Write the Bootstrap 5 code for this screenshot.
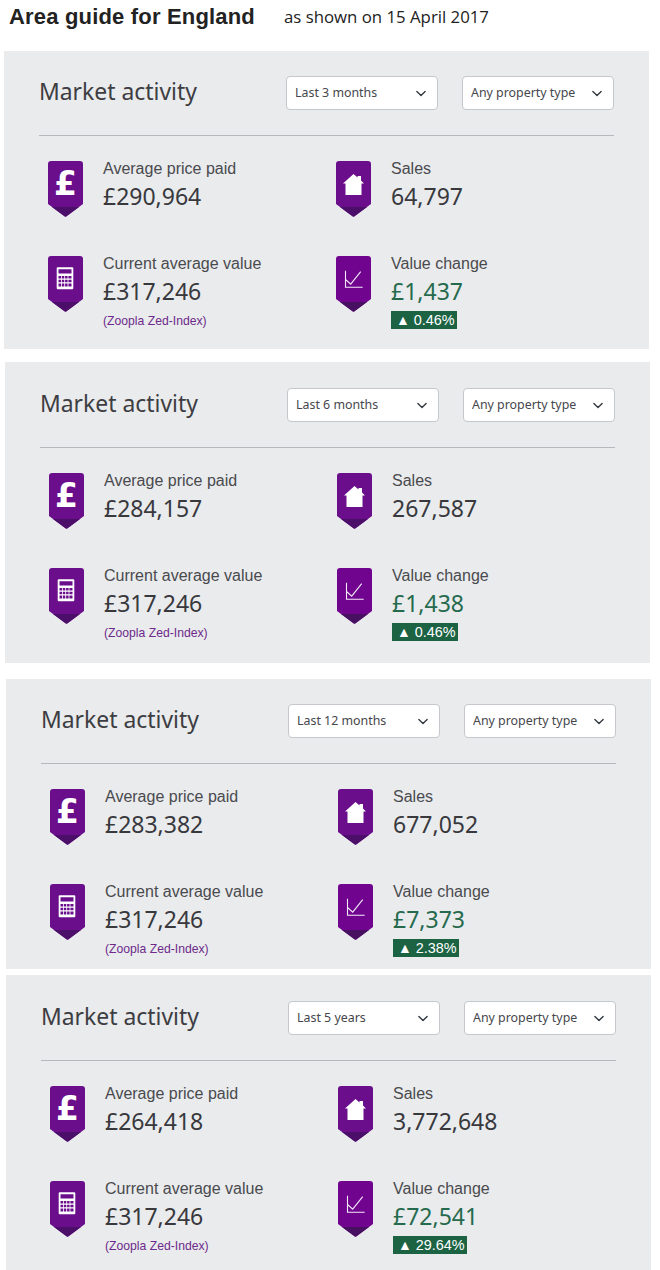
<!DOCTYPE html>
<html lang="en">
<head>
<meta charset="utf-8">
<title>Area guide for England</title>
<link rel="stylesheet" href="https://cdn.jsdelivr.net/npm/bootstrap@5.3.0/dist/css/bootstrap.min.css">
<style>
html,body{background:#fff;margin:0;padding:0;overflow:hidden}
body{width:660px;height:1270px;font-family:"Liberation Sans",Arial,sans-serif;color:#3a3a3e}
.top-bar{height:51px;padding:3px 0 0 9px;gap:29px}
.top-title{font:700 22px/28px "Liberation Sans",Arial,sans-serif;letter-spacing:.18px;color:#222;margin:0}
.top-note{font:400 16.8px/28px "Open Sans",sans-serif;color:#222}
.pane{width:645px;background:#e9ebed;padding:25px 35px 0;box-sizing:border-box}
.pane-a{margin-left:4px;height:298px;margin-bottom:13px}
.pane-b{margin-left:5px;height:301px;margin-bottom:16px;padding-top:26px}
.pane-c{margin-left:6px;height:290px;margin-bottom:6px}
.pane-d{margin-left:6px;height:295px;padding-top:26px}
.pane-head{height:34px;width:575px}
.pane-title{font:400 22.9px/30px "Noto Sans",sans-serif;color:#3d3d42;margin:0 0 2px;flex:1}
.pick{width:152px;height:34px;font:400 12.4px/18px "Noto Sans",sans-serif;color:#46464c;padding:0 20px 0 8px;border:1px solid #c4c8cc;border-radius:4px;background-size:14px 11px;background-position:right 9.5px center;background-color:#fff}
.pick+.pick{margin-left:24px}
.rule{width:575px;height:1px;background:#b3b9bd;margin:25px 0}
.stat-grid{width:576px;margin-left:9px;display:grid;grid-template-columns:288px 288px;grid-auto-rows:95px}
.stat{gap:20px}
.pin{width:35px;height:56px;flex:none;display:block}
.stat-label{font:400 16px/18px "Liberation Sans",Arial,sans-serif;color:#4a4a4e;margin-bottom:1px;margin-top:-1px}
.stat-value{font:400 23px/34px "Noto Sans",sans-serif;color:#38383d}
.stat-value.rise{color:#266a4d}
.stat-note{font:400 12.2px/14px "Liberation Sans",Arial,sans-serif;color:#6d2a8a;margin-top:6px}
.rise-tag{display:inline-block;background:#1c6344;color:#fff;font:400 14.4px/18px "Liberation Sans",Arial,sans-serif;padding:0 2px 0 5px;margin-top:2px}
.rise-tag i{font-style:normal;font-size:14px}
.pound{font-family:"DejaVu Sans",sans-serif;font-weight:700;font-size:33px;fill:#fff}
</style>
</head>
<body>
<svg width="0" height="0" class="position-absolute">
<defs>
<symbol id="pin-a" viewBox="0 0 35 56"><path d="M3 0H32A3 3 0 0 1 35 3V43L18.500 55.300Q17.500 56 16.500 55.300L0 43V3A3 3 0 0 1 3 0Z" fill="#6a0e8c"/><path d="M4 46H31L18.500 55.300Q17.500 56 16.500 55.300Z" fill="#4b0f69"/></symbol>
<symbol id="pin-b" viewBox="0 0 35 56"><path d="M3 0H32A3 3 0 0 1 35 3V43L18.500 55.300Q17.500 56 16.500 55.300L0 43V3A3 3 0 0 1 3 0Z" fill="#70048f"/><path d="M4 46H31L18.500 55.300Q17.500 56 16.500 55.300Z" fill="#481060"/></symbol>
<symbol id="glyph-house" viewBox="0 0 35 56"><path d="M17.500 13L21.500 16.500V15H25V19.500L28 22.500H25.500V34H9.500V22.500H7Z" fill="#fff"/></symbol>
<symbol id="glyph-calc" viewBox="0 0 35 56"><path fill-rule="evenodd" d="M9.700 11.300H24.300A1 1 0 0 1 25.300 12.300V32.300A1 1 0 0 1 24.300 33.300H9.700A1 1 0 0 1 8.700 32.300V12.300A1 1 0 0 1 9.700 11.300ZM10.500 13.200V17.500H23.500V13.200ZM10.500 20V22.500H13V20ZM13.800 20V22.500H16.300V20ZM17.100 20V22.500H19.600V20ZM20.400 20V22.500H23.500V20ZM10.500 23.700V26.200H13V23.700ZM13.800 23.700V26.200H16.300V23.700ZM17.100 23.700V26.200H19.600V23.700ZM20.400 23.700V26.200H23.500V23.700ZM10.500 27.400V30.500H13V27.400ZM13.800 27.400V30.500H16.300V27.400ZM17.100 27.400V30.500H19.600V27.400ZM20.400 27.400V30.500H23.500V27.400Z" fill="#fff"/></symbol>
<symbol id="glyph-chart" viewBox="0 0 35 56"><path d="M9.500 14.700V31.300H26.700M9.500 23.500L14.700 28.200 24.700 15.700" fill="none" stroke="#f3e9f7" stroke-width="1.100"/></symbol>
</defs>
</svg>

<div class="top-bar d-flex align-items-start">
  <h1 class="top-title">Area guide for England</h1>
  <span class="top-note">as shown on 15 April 2017</span>
</div>

<section class="pane pane-a">
  <div class="pane-head d-flex align-items-center">
    <h2 class="pane-title">Market activity</h2>
    <select class="form-select pick"><option>Last 3 months</option></select>
    <select class="form-select pick"><option>Any property type</option></select>
  </div>
  <div class="rule"></div>
  <div class="stat-grid">
    <div class="stat d-flex"><svg class="pin"><use href="#pin-a"/><text x="17.500" y="34" text-anchor="middle" class="pound">£</text></svg><div><div class="stat-label">Average price paid</div><div class="stat-value">£290,964</div></div></div>
    <div class="stat d-flex"><svg class="pin"><use href="#pin-a"/><use href="#glyph-house"/></svg><div><div class="stat-label">Sales</div><div class="stat-value">64,797</div></div></div>
    <div class="stat d-flex"><svg class="pin"><use href="#pin-a"/><use href="#glyph-calc"/></svg><div><div class="stat-label">Current average value</div><div class="stat-value">£317,246</div><div class="stat-note">(Zoopla Zed-Index)</div></div></div>
    <div class="stat d-flex"><svg class="pin"><use href="#pin-b"/><use href="#glyph-chart"/></svg><div><div class="stat-label">Value change</div><div class="stat-value rise">£1,437</div><div class="rise-tag"><i>▲</i> 0.46%</div></div></div>
  </div>
</section>

<section class="pane pane-b">
  <div class="pane-head d-flex align-items-center">
    <h2 class="pane-title">Market activity</h2>
    <select class="form-select pick"><option>Last 6 months</option></select>
    <select class="form-select pick"><option>Any property type</option></select>
  </div>
  <div class="rule"></div>
  <div class="stat-grid">
    <div class="stat d-flex"><svg class="pin"><use href="#pin-a"/><text x="17.500" y="34" text-anchor="middle" class="pound">£</text></svg><div><div class="stat-label">Average price paid</div><div class="stat-value">£284,157</div></div></div>
    <div class="stat d-flex"><svg class="pin"><use href="#pin-a"/><use href="#glyph-house"/></svg><div><div class="stat-label">Sales</div><div class="stat-value">267,587</div></div></div>
    <div class="stat d-flex"><svg class="pin"><use href="#pin-a"/><use href="#glyph-calc"/></svg><div><div class="stat-label">Current average value</div><div class="stat-value">£317,246</div><div class="stat-note">(Zoopla Zed-Index)</div></div></div>
    <div class="stat d-flex"><svg class="pin"><use href="#pin-b"/><use href="#glyph-chart"/></svg><div><div class="stat-label">Value change</div><div class="stat-value rise">£1,438</div><div class="rise-tag"><i>▲</i> 0.46%</div></div></div>
  </div>
</section>

<section class="pane pane-c">
  <div class="pane-head d-flex align-items-center">
    <h2 class="pane-title">Market activity</h2>
    <select class="form-select pick"><option>Last 12 months</option></select>
    <select class="form-select pick"><option>Any property type</option></select>
  </div>
  <div class="rule"></div>
  <div class="stat-grid">
    <div class="stat d-flex"><svg class="pin"><use href="#pin-a"/><text x="17.500" y="34" text-anchor="middle" class="pound">£</text></svg><div><div class="stat-label">Average price paid</div><div class="stat-value">£283,382</div></div></div>
    <div class="stat d-flex"><svg class="pin"><use href="#pin-a"/><use href="#glyph-house"/></svg><div><div class="stat-label">Sales</div><div class="stat-value">677,052</div></div></div>
    <div class="stat d-flex"><svg class="pin"><use href="#pin-a"/><use href="#glyph-calc"/></svg><div><div class="stat-label">Current average value</div><div class="stat-value">£317,246</div><div class="stat-note">(Zoopla Zed-Index)</div></div></div>
    <div class="stat d-flex"><svg class="pin"><use href="#pin-b"/><use href="#glyph-chart"/></svg><div><div class="stat-label">Value change</div><div class="stat-value rise">£7,373</div><div class="rise-tag"><i>▲</i> 2.38%</div></div></div>
  </div>
</section>

<section class="pane pane-d">
  <div class="pane-head d-flex align-items-center">
    <h2 class="pane-title">Market activity</h2>
    <select class="form-select pick"><option>Last 5 years</option></select>
    <select class="form-select pick"><option>Any property type</option></select>
  </div>
  <div class="rule"></div>
  <div class="stat-grid">
    <div class="stat d-flex"><svg class="pin"><use href="#pin-a"/><text x="17.500" y="34" text-anchor="middle" class="pound">£</text></svg><div><div class="stat-label">Average price paid</div><div class="stat-value">£264,418</div></div></div>
    <div class="stat d-flex"><svg class="pin"><use href="#pin-a"/><use href="#glyph-house"/></svg><div><div class="stat-label">Sales</div><div class="stat-value">3,772,648</div></div></div>
    <div class="stat d-flex"><svg class="pin"><use href="#pin-a"/><use href="#glyph-calc"/></svg><div><div class="stat-label">Current average value</div><div class="stat-value">£317,246</div><div class="stat-note">(Zoopla Zed-Index)</div></div></div>
    <div class="stat d-flex"><svg class="pin"><use href="#pin-b"/><use href="#glyph-chart"/></svg><div><div class="stat-label">Value change</div><div class="stat-value rise">£72,541</div><div class="rise-tag"><i>▲</i> 29.64%</div></div></div>
  </div>
</section>
<script src="https://cdn.jsdelivr.net/npm/bootstrap@5.3.0/dist/js/bootstrap.bundle.min.js"></script>
</body>
</html>
